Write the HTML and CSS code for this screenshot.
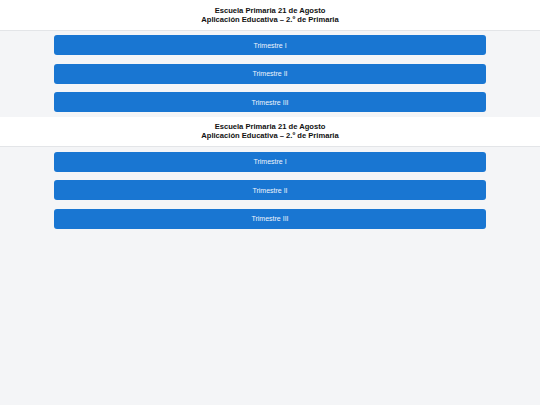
FILE: index.html
```html
<!DOCTYPE html>
<html lang="es">
<head>
<meta charset="utf-8">
<title>Escuela Primaria 21 de Agosto</title>
<link rel="stylesheet" href="styles.css">
</head>
<body>
<section class="screen">
  <header class="app-header">
    <h1 class="title">Escuela Primaria 21 de Agosto<br>Aplicación Educativa – 2.º de Primaria</h1>
  </header>
  <main class="menu">
    <button class="menu-btn">Trimestre I</button>
    <button class="menu-btn">Trimestre II</button>
    <button class="menu-btn">Trimestre III</button>
  </main>
</section>
<section class="screen">
  <header class="app-header">
    <h1 class="title">Escuela Primaria 21 de Agosto<br>Aplicación Educativa – 2.º de Primaria</h1>
  </header>
  <main class="menu">
    <button class="menu-btn">Trimestre I</button>
    <button class="menu-btn">Trimestre II</button>
    <button class="menu-btn">Trimestre III</button>
  </main>
</section>
</body>
</html>
```
FILE: styles.css
```css
html, body {
  margin: 0;
  padding: 0;
}
body {
  background: #f4f5f7;
  font-family: "Liberation Sans", Arial, sans-serif;
  color: #111;
  min-height: 405px;
}
.app-header {
  background: #fff;
  border-bottom: 1px solid #e3e5e8;
  height: 29.5px;
  display: flex;
  align-items: center;
  justify-content: center;
}
.title {
  margin: 0;
  font-size: 7.6px;
  line-height: 9px;
  font-weight: bold;
  text-align: center;
  color: #111;
}
.menu {
  display: flex;
  flex-direction: column;
  gap: 8.5px;
  padding: 4.5px 54px;
}
.menu-btn {
  height: 20px;
  border: none;
  border-radius: 3px;
  background: #1976d2;
  color: #eef4fc;
  font-family: "Liberation Sans", Arial, sans-serif;
  font-size: 7px;
  padding: 0;
}
```
